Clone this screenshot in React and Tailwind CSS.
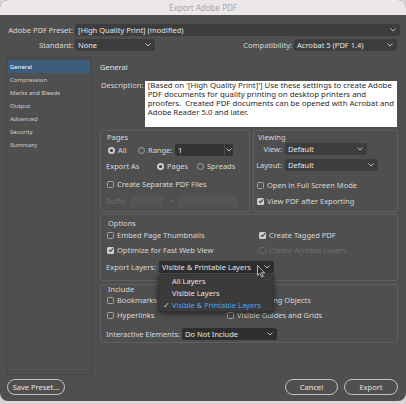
import React from "react";

const Chev = ({ c = "#bdbdbd" }) => (
  <svg width="6" height="4" viewBox="0 0 6 4" className="shrink-0">
    <path d="M0.7 0.7L3 3L5.3 0.7" stroke={c} strokeWidth="1" fill="none" strokeLinecap="round" strokeLinejoin="round" />
  </svg>
);

function Select({ value, cls }) {
  return (
    <div className={"h-[12px] flex items-center justify-between pl-[3px] pr-[4px] rounded-[2px] text-[#e6e6e6] leading-[10px] " + cls}>
      <span className="whitespace-nowrap">{value}</span>
      <Chev />
    </div>
  );
}

function Check({ checked, disabled }) {
  if (checked)
    return (
      <span className="w-[7px] h-[7px] rounded-[1.5px] bg-[#cdcdcd] flex items-center justify-center shrink-0">
        <svg width="6" height="6" viewBox="0 0 6 6">
          <path d="M1 3.1L2.4 4.5L5 1.3" stroke="#383838" strokeWidth="1.1" fill="none" />
        </svg>
      </span>
    );
  return (
    <span className={"w-[7px] h-[7px] rounded-[1.5px] border shrink-0 " + (disabled ? "border-[#666666]" : "border-[#a3a3a3]")} />
  );
}

function Radio({ checked, cls }) {
  return checked ? (
    <span className={"w-[7px] h-[7px] rounded-full bg-[#cdcdcd] flex items-center justify-center shrink-0 " + (cls || "")}>
      <span className="w-[3px] h-[3px] rounded-full bg-[#3a3a3a]" />
    </span>
  ) : (
    <span className={"w-[7px] h-[7px] rounded-full border border-[#a3a3a3] shrink-0 " + (cls || "")} />
  );
}

function CheckRow({ checked, disabled, label, cls }) {
  return (
    <div className={"h-[10px] flex items-center " + (cls || "")}>
      <Check checked={checked} disabled={disabled} />
      <span className={"ml-[3px] whitespace-nowrap leading-[10px] " + (disabled ? "text-[#6e6e6e]" : "")}>{label}</span>
    </div>
  );
}

export default function App() {
  return (
    <div className="w-[406px] h-[404px] bg-[#d9d4d6] font-['Noto_Sans',sans-serif] text-[7.5px] text-[#d8d8d8] leading-[10px]">
      <div className="relative h-[401px] bg-[#4f4f4f] rounded-[8px] overflow-hidden flex flex-col">
        {/* Title bar */}
        <div className="h-[15px] shrink-0 bg-[#ece7e9] flex items-center justify-center text-[8px] text-[#a9a4a6]">
          Export Adobe PDF
        </div>

        {/* Preset row */}
        <div className="mt-[9px] h-[12px] flex items-center shrink-0">
          <div className="w-[73px] text-right whitespace-nowrap">Adobe PDF Preset:</div>
          <Select value="[High Quality Print] (modified)" cls="ml-[2px] flex-1 mr-[6px] bg-[#3d3d3d]" />
        </div>

        {/* Standard row */}
        <div className="mt-[3px] h-[12px] flex items-center shrink-0">
          <div className="w-[73px] text-right">Standard:</div>
          <Select value="None" cls="ml-[2px] w-[80px] bg-[#3d3d3d]" />
          <div className="ml-auto whitespace-nowrap">Compatibility:</div>
          <Select value="Acrobat 5 (PDF 1.4)" cls="ml-[2px] w-[103px] mr-[9px] bg-[#3d3d3d]" />
        </div>

        {/* Body */}
        <div className="mt-[6px] h-[318px] flex shrink-0">
          {/* Sidebar */}
          <div className="ml-[6px] w-[86px] h-full border border-[#444444] pt-[2px] px-[1px] text-[6px] text-[#d0d0d0]">
            <div className="h-[13px] flex items-center pl-[2px] bg-[#3c5c7e] text-white">General</div>
            <div className="h-[13px] flex items-center pl-[2px]">Compression</div>
            <div className="h-[13px] flex items-center pl-[2px]">Marks and Bleeds</div>
            <div className="h-[13px] flex items-center pl-[2px]">Output</div>
            <div className="h-[13px] flex items-center pl-[2px]">Advanced</div>
            <div className="h-[13px] flex items-center pl-[2px]">Security</div>
            <div className="h-[13px] flex items-center pl-[2px]">Summary</div>
          </div>

          {/* Main */}
          <div className="ml-[5px] w-[301px] flex flex-col">
            <div className="mt-[5px] h-[10px] flex items-center pl-[3px] text-[#e2e2e2]">General</div>

            <div className="mt-[9px] flex items-start pl-[4px]">
              <div className="w-[45px] h-[9px] leading-[9px] whitespace-nowrap">Description:</div>
              <div className="flex-1 h-[46px] bg-white text-[#2a2a2a] text-[7.8px] leading-[9px] px-[3px] mr-[1px] whitespace-nowrap">
                <div>[Based on '[High Quality Print]'] Use these settings to create Adobe</div>
                <div>PDF documents for quality printing on desktop printers and</div>
                <div>proofers.&nbsp; Created PDF documents can be opened with Acrobat and</div>
                <div>Adobe Reader 5.0 and later.</div>
              </div>
            </div>

            {/* Pages + Viewing */}
            <div className="mt-[3px] ml-[3px] h-[82px] flex gap-[3px]">
              <div className="w-[150px] border border-[#5f5f5f] rounded-[2px] flex flex-col">
                <div className="mt-[1px] h-[10px] flex items-center pl-[6px]">Pages</div>
                <div className="mt-[2px] h-[12px] flex items-center pl-[7px]">
                  <Radio checked />
                  <span className="ml-[3px] w-[17px]">All</span>
                  <Radio cls="ml-[3px]" />
                  <span className="ml-[3px] w-[24px]">Range:</span>
                  <div className="ml-[3px] w-[58px] h-[12px] flex rounded-[2px] bg-[#333333] text-[#e6e6e6]">
                    <div className="flex-1 flex items-center pl-[3px]">1</div>
                    <div className="w-[9px] border-l border-[#4a4a4a] flex items-center justify-center">
                      <Chev />
                    </div>
                  </div>
                </div>
                <div className="mt-[4px] h-[12px] flex items-center pl-[5px]">
                  <span className="w-[51px]">Export As</span>
                  <Radio checked />
                  <span className="ml-[3px] w-[27px]">Pages</span>
                  <Radio cls="ml-[3px]" />
                  <span className="ml-[3px]">Spreads</span>
                </div>
                <CheckRow label="Create Separate PDF Files" cls="mt-[7px] pl-[6px]" />
                <div className="mt-[6px] h-[12px] flex items-center pl-[5px] text-[#6e6e6e]">
                  <span className="w-[25px]">Suffix:</span>
                  <div className="w-[32px] h-[11px] bg-[#555555] rounded-[1px]" />
                  <span className="ml-[7px] w-[8px]">*</span>
                  <div className="w-[59px] h-[11px] bg-[#555555] rounded-[1px]" />
                </div>
              </div>

              <div className="flex-1 border border-[#5f5f5f] rounded-[2px] flex flex-col">
                <div className="mt-[1px] h-[10px] flex items-center pl-[4px]">Viewing</div>
                <div className="mt-[1px] h-[12px] flex items-center">
                  <span className="w-[28px] text-right">View:</span>
                  <Select value="Default" cls="ml-[3px] w-[82px] bg-[#3d3d3d]" />
                </div>
                <div className="mt-[4px] h-[12px] flex items-center">
                  <span className="w-[28px] text-right">Layout:</span>
                  <Select value="Default" cls="ml-[3px] w-[93px] bg-[#3d3d3d]" />
                </div>
                <CheckRow label="Open in Full Screen Mode" cls="mt-[9px] pl-[3px]" />
                <CheckRow checked label="View PDF after Exporting" cls="mt-[6px] pl-[3px]" />
              </div>
            </div>

            {/* Options */}
            <div className="mt-[2px] ml-[3px] h-[67px] border border-[#5f5f5f] rounded-[2px] flex flex-col">
              <div className="mt-[3px] h-[10px] flex items-center pl-[7px]">Options</div>
              <div className="mt-[2px] flex pl-[6px]">
                <CheckRow label="Embed Page Thumbnails" cls="w-[152px]" />
                <CheckRow checked label="Create Tagged PDF" />
              </div>
              <div className="mt-[5px] flex pl-[6px]">
                <CheckRow checked label="Optimize for Fast Web View" cls="w-[152px]" />
                <CheckRow disabled label="Create Acrobat Layers" />
              </div>
              <div className="mt-[6px] h-[12px] flex items-center pl-[5px]">
                <span className="w-[53px] whitespace-nowrap">Export Layers:</span>
                <Select value="Visible & Printable Layers" cls="w-[115px] bg-[#2e2e2e]" />
              </div>
            </div>

            {/* Include */}
            <div className="mt-[3px] ml-[3px] h-[59px] border border-[#5f5f5f] rounded-[2px] flex flex-col">
              <div className="h-[8px] flex items-center pl-[7px]">Include</div>
              <div className="mt-[2px] flex pl-[6px]">
                <CheckRow label="Bookmarks" cls="w-[120px]" />
                <CheckRow label="Non-Printing Objects" />
              </div>
              <div className="mt-[5px] flex pl-[6px]">
                <CheckRow label="Hyperlinks" cls="w-[120px]" />
                <CheckRow label="Visible Guides and Grids" />
              </div>
              <div className="mt-[8px] h-[11px] flex items-center pl-[5px]">
                <span className="w-[76px] whitespace-nowrap">Interactive Elements:</span>
                <Select value="Do Not Include" cls="w-[95px] h-[11px] bg-[#2e2e2e]" />
              </div>
            </div>
          </div>
        </div>

        {/* Buttons */}
        <div className="mt-[4px] h-[16px] flex items-center shrink-0">
          <div className="ml-[7px] w-[58px] h-[16px] rounded-full border border-[#c2c2c2] flex items-center justify-center text-[#e6e6e6]">
            Save Preset...
          </div>
          <div className="ml-auto w-[53px] h-[16px] rounded-full border border-[#c2c2c2] flex items-center justify-center text-[#e6e6e6]">
            Cancel
          </div>
          <div className="ml-[6px] mr-[8px] w-[54px] h-[16px] rounded-full border border-[#c2c2c2] flex items-center justify-center text-[#e6e6e6]">
            Export
          </div>
        </div>

        {/* Dropdown menu */}
        <div className="absolute left-[158px] top-[274px] w-[116px] h-[38px] bg-[#3b3b3b] rounded-[3px] shadow-[0_2px_6px_rgba(0,0,0,0.5)] border border-[#333333] flex flex-col">
          <div className="h-[12px] flex items-center pl-[13px] text-[#e4e4e4]">All Layers</div>
          <div className="h-[12px] flex items-center pl-[13px] text-[#e4e4e4]">Visible Layers</div>
          <div className="h-[12px] flex items-center pl-[4px] text-[#4aa6ec]">
            <span className="w-[9px] text-[#d0d0d0]">✓</span>
            Visible &amp; Printable Layers
          </div>
        </div>

        {/* Cursor */}
        <svg className="absolute left-[257px] top-[265px]" width="8" height="13" viewBox="0 0 8 13">
          <path d="M0.5 0.5L0.5 10.5L3 8.2L4.8 12L6.3 11.3L4.6 7.7L7.6 7.7Z" fill="#2a2a2a" stroke="#d8d8d8" strokeWidth="0.8" strokeLinejoin="round" />
        </svg>
      </div>
    </div>
  );
}
